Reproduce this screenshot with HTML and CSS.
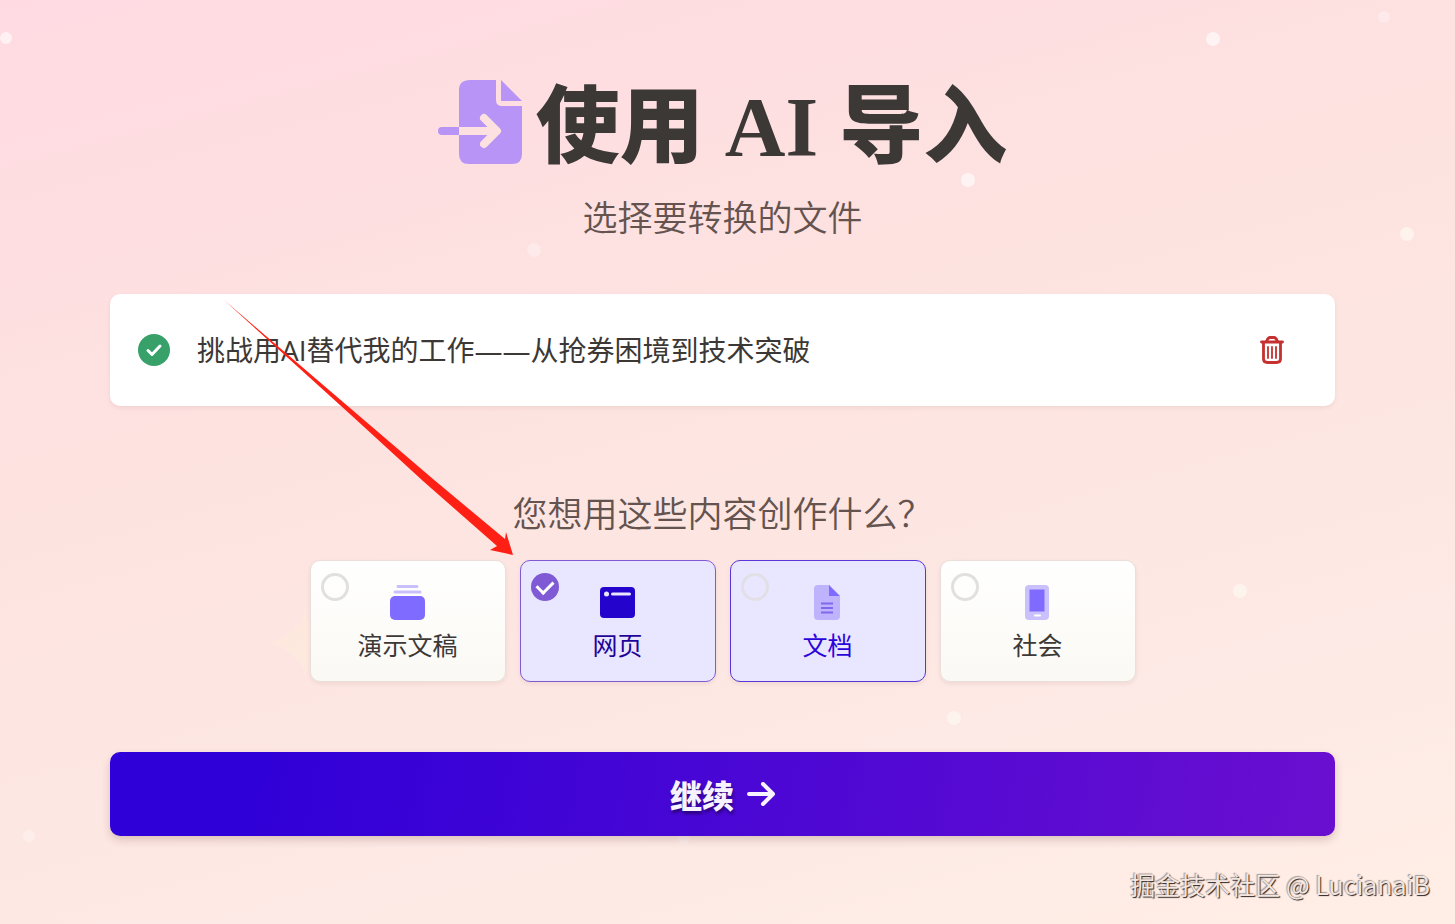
FILE: index.html
```html
<!DOCTYPE html>
<html lang="zh-CN">
<head>
    <meta charset="utf-8">
    <title>使用 AI 导入</title>
    <link rel="stylesheet" href="styles.css">
</head>
<body>
    <!-- background sparkles -->
    <svg class="sparkles" width="1455" height="924" aria-hidden="true">
        <g fill="#fff" opacity=".6">
            <circle cx="6" cy="38" r="6"/>
            <circle cx="1213" cy="39" r="7"/>
            <circle cx="968" cy="180" r="7"/>
        </g>
        <g fill="#fffaf2" opacity=".65">
            <circle cx="1407" cy="234" r="7"/>
            <circle cx="1240" cy="591" r="7"/>
            <circle cx="954" cy="718" r="7"/>
        </g>
        <g fill="#fff" opacity=".3">
            <circle cx="1384" cy="17" r="6"/>
            <circle cx="534" cy="250" r="7"/>
            <circle cx="29" cy="836" r="6"/>
            <circle cx="684" cy="838" r="6"/>
        </g>
        <path d="M266 643q32-6 39-32q7 26 39 32q-32 6-39 32q-7-26-39-32z" fill="#fdeadd" opacity=".7"/>
    </svg>

    <main class="page">
        <header class="intro">
            <h1>
                <svg class="import-icon" viewBox="0 0 84 84" aria-hidden="true">
                    <path d="M32 0h26v20q0 6 6 6h20v48q0 10-10 10H31q-10 0-10-10V10Q21 0 32 0z" fill="#b794f6"/>
                    <path d="M63 0l21 21H63z" fill="#b794f6"/>
                    <path d="M21 51h36M46 38l13 13-13 13" fill="none" stroke="#fde1e0" stroke-width="8" stroke-linecap="round" stroke-linejoin="round"/>
                    <path d="M21 47H4a4 4 0 0 0 0 8h17z" fill="#b794f6"/>
                </svg>
                <span>使用<span class="latin"> AI </span>导入</span>
            </h1>
            <p>选择要转换的文件</p>
        </header>

        <section class="file">
            <svg class="file-ok" viewBox="0 0 32 32" aria-hidden="true">
                <circle cx="16" cy="16" r="16" fill="#38a169"/>
                <path d="M10 16.500l4 4 8-8.500" fill="none" stroke="#fff" stroke-width="3" stroke-linecap="round" stroke-linejoin="round"/>
            </svg>
            <span class="file-name">挑战用AI替代我的工作——从抢券困境到技术突破</span>
            <button class="delete" type="button" aria-label="删除">
                <svg viewBox="0 0 24 28" fill="none" stroke="#c53030" stroke-linecap="round" aria-hidden="true">
                    <path d="M1.500 6h21M3.500 6v17q0 3.500 4 3.500h9q4 0 4-3.500V6" stroke-width="2.800"/>
                    <path d="M6.500 5.500Q8 1.500 10 1.500h4q2 0 3.500 4" stroke-width="2.800"/>
                    <path d="M8 11v11M12 11v11M16 11v11" stroke-width="1.800"/>
                </svg>
            </button>
        </section>

        <fieldset class="formats">
            <legend>您想用这些内容创作什么？</legend>
            <div class="options">
                <label class="option">
                    <input type="radio" name="format">
                    <svg viewBox="0 0 36 36" aria-hidden="true">
                        <path d="M8 1.500h19M5 7h25" stroke="#c9c0fb" stroke-width="3" stroke-linecap="round"/>
                        <rect y="11" width="35" height="24" rx="5" fill="#7f6bff"/>
                    </svg>
                    <span>演示文稿</span>
                </label>
                <label class="option selected">
                    <input type="radio" name="format" checked>
                    <svg viewBox="0 0 36 36" aria-hidden="true">
                        <rect y="2" width="35" height="31" rx="4" fill="#2404cc"/>
                        <circle cx="6.500" cy="9" r="2.500" fill="#e9e6ff"/>
                        <path d="M12.500 9h17" stroke="#e9e6ff" stroke-width="3" stroke-linecap="round"/>
                    </svg>
                    <span>网页</span>
                </label>
                <label class="option hovered">
                    <input type="radio" name="format">
                    <svg viewBox="0 0 36 36" aria-hidden="true">
                        <path d="M8 0h12v11h10v20q0 4-4 4H8q-4 0-4-4V4q0-4 4-4z" fill="#bfb3fd"/>
                        <path d="M19 0l11 11h-11z" fill="#7f6bff"/>
                        <path d="M11 18.500h12M11 23h12M11 27.500h12" stroke="#8168ec" stroke-width="2"/>
                    </svg>
                    <span>文档</span>
                </label>
                <label class="option">
                    <input type="radio" name="format">
                    <svg viewBox="0 0 36 36" aria-hidden="true">
                        <rect x="5" width="24" height="35" rx="4" fill="#cac1fc"/>
                        <path d="M9.500 4.500h15v22h-15z" fill="#7f6bff"/>
                        <path d="M15 30.500h5" stroke="#fff" stroke-width="2" stroke-linecap="round"/>
                    </svg>
                    <span>社会</span>
                </label>
            </div>
        </fieldset>

        <button class="continue" type="button">
            继续
            <svg viewBox="0 0 28 24" fill="none" stroke="#f7f2ff" stroke-width="4" stroke-linecap="round" stroke-linejoin="round" aria-hidden="true">
                <path d="M2 12h23M16 2l10 10-10 10"/>
            </svg>
        </button>
    </main>

    <!-- red pointer to the chosen format -->
    <svg class="pointer" viewBox="0 0 290 256" aria-hidden="true">
        <path d="M0 0L133 114L209 179L281 239L282 232L289 255L266 250L273 246L199 181L127 115z" fill="#ff2015"/>
    </svg>
    <div class="watermark">掘金技术社区 @ LucianaiB</div>
</body>
</html>
```

FILE: styles.css
```css
* {
    box-sizing: border-box;
}

body {
    margin: 0;
    min-height: 100vh;
    position: relative;
    overflow-x: hidden;
    font-family: "Noto Sans CJK SC", "Noto Sans", sans-serif;
    color: #3c3835;
    background: linear-gradient(165deg, #ffdae2 0%, #fde4e0 45%, #fde9e5 75%, #ffeee6 100%);
}

h1, p {
    margin: 0;
}

button {
    border: 0;
    font-family: inherit;
    cursor: pointer;
}

.sparkles {
    position: absolute;
    top: 0;
    left: 0;
}

.page {
    position: relative;
    display: flex;
    flex-direction: column;
    padding: 62px 120px 72px 110px;
}

.intro {
    text-align: center;
}

h1 {
    display: flex;
    justify-content: center;
    align-items: flex-start;
    gap: 14px;
    font-size: 84px;
    line-height: 116px;
    font-weight: 900;
    font-family: "Noto Sans CJK SC", sans-serif;
}

.latin {
    font-family: "Liberation Serif", serif;
    font-weight: 700;
}

.import-icon {
    width: 84px;
    height: 84px;
    margin-top: 18px;
}

.intro p {
    margin-top: 4px;
    font-size: 35px;
    line-height: 52px;
    font-weight: 350;
    color: #64534f;
}

.file {
    display: flex;
    align-items: center;
    height: 112px;
    margin-top: 52px;
    padding: 0 48px 0 28px;
    border-radius: 10px;
    background: #fff;
    box-shadow: 0 2px 4px rgba(90, 40, 30, .08);
}

.file-ok {
    width: 32px;
    height: 32px;
    margin-right: 27px;
}

.file-name {
    flex: 1;
    font-family: "Open Sans", "Noto Sans CJK SC", sans-serif;
    font-size: 28px;
    line-height: 40px;
}

.delete {
    display: flex;
    padding: 0 3px;
    background: none;
}

.delete svg {
    width: 24px;
    height: 28px;
}

.formats {
    margin: 80px 0 0;
    padding: 0;
    border: 0;
}

.formats legend {
    margin: 0 auto;
    padding: 0;
    font-size: 35px;
    line-height: 52px;
    font-weight: 350;
    color: #64534f;
}

.options {
    display: flex;
    justify-content: center;
    gap: 14px;
    margin-top: 22px;
}

.option {
    position: relative;
    display: flex;
    flex-direction: column;
    align-items: center;
    width: 196px;
    height: 122px;
    padding-top: 24px;
    border: 1px solid #eadfda;
    border-radius: 10px;
    background: linear-gradient(#fff, #faf9f4);
    box-shadow: 0 2px 4px rgba(90, 40, 30, .08);
    font-size: 25px;
    line-height: 36px;
    cursor: pointer;
}

.option svg {
    width: 36px;
    height: 36px;
    margin-bottom: 5px;
}

.option input {
    appearance: none;
    position: absolute;
    top: 12px;
    left: 10px;
    width: 28px;
    height: 28px;
    margin: 0;
    border: 3px solid #e2dfdf;
    border-radius: 50%;
}

.option input:checked {
    display: grid;
    place-items: center;
    border: 0;
    background: #805ad5;
}

.option input:checked::after {
    content: "";
    width: 13px;
    height: 8px;
    margin-bottom: 4px;
    border: solid #fff;
    border-width: 0 0 3px 3px;
    transform: rotate(-45deg);
}

.selected {
    border-color: #805ad5;
    background: #e9e6ff;
    color: #1f0499;
}

.hovered {
    border-color: #5a35d8;
    background: #e9e6ff;
    color: #2b04dc;
}

.hovered input {
    border-color: #e2dfe6;
}

.continue {
    display: flex;
    justify-content: center;
    align-items: center;
    gap: 13px;
    height: 84px;
    margin-top: 70px;
    border-radius: 10px;
    background: linear-gradient(100deg, #3000d8 12%, #6a0fd0 100%);
    box-shadow: 0 4px 8px rgba(90, 40, 30, .2);
    color: #f7f2ff;
    font-size: 32px;
    font-weight: 900;
    text-shadow: 1px 3px 3px rgba(0, 0, 0, .4);
}

.continue svg {
    width: 28px;
    height: 24px;
}

.pointer {
    position: absolute;
    top: 300px;
    left: 224px;
    width: 290px;
    height: 256px;
}

.watermark {
    position: absolute;
    right: 25px;
    bottom: 22px;
    font-size: 25px;
    line-height: 36px;
    color: #f3e6e0;
    text-shadow: 1px 1px 1px #2b2220, -1px -1px 1px #a79c98;
}
```
